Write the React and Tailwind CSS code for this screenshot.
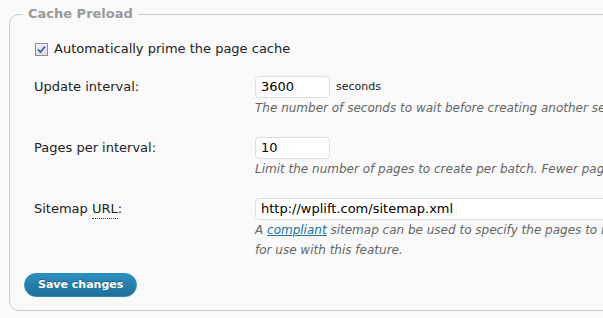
export default function App() {
  return (
    <div
      className="w-[603px] h-[318px] overflow-hidden bg-[#f9f9f9] text-[#333]"
      style={{ fontFamily: '"DejaVu Sans", Verdana, sans-serif' }}
    >
      <div className="pt-[6px] pl-[9px]">
        <fieldset className="w-[640px] border border-[#cccccc] rounded-[10px] pb-[13px]">
          <legend className="ml-[13px] px-[5px] text-[13px] font-bold text-[#999999] leading-[16px]">
            Cache Preload
          </legend>

          <div className="pl-[25px] pt-[19px] flex items-center h-[16px] box-content">
            <span className="w-[13px] h-[13px] border border-[#8f8f8f] bg-gradient-to-b from-[#f0f0f0] to-[#dcdcdc] flex items-center justify-center">
              <svg width="9" height="9" viewBox="0 0 9 9">
                <path d="M1 4.5 L3.5 7 L8 1.5" stroke="#3b55a8" strokeWidth="1.6" fill="none" />
              </svg>
            </span>
            <span className="ml-[6px] text-[13px] text-[#222]">Automatically prime the page cache</span>
          </div>

          <div className="pl-[24px] mt-[19px] flex">
            <div className="w-[221px] h-[22px] flex items-center text-[13px] text-[#222]">Update interval:</div>
            <div>
              <div className="flex items-center">
                <div className="w-[75px] h-[22px] border border-[#dfdfdf] rounded-[4px] bg-white px-[5px] flex items-center text-[13px] text-black">
                  3600
                </div>
                <span className="ml-[6px] text-[11px] text-[#222]">seconds</span>
              </div>
              <div className="w-[340px] text-[12px] italic text-[#666] leading-[20px] whitespace-nowrap">
                The number of seconds to wait before creating another set of cached pages.
              </div>
            </div>
          </div>

          <div className="pl-[24px] mt-[19px] flex">
            <div className="w-[221px] h-[22px] flex items-center text-[13px] text-[#222]">Pages per interval:</div>
            <div>
              <div className="w-[75px] h-[22px] border border-[#dfdfdf] rounded-[4px] bg-white px-[5px] flex items-center text-[13px] text-black">
                10
              </div>
              <div className="w-[340px] text-[12px] italic text-[#666] leading-[20px] whitespace-nowrap">
                Limit the number of pages to create per batch. Fewer pages will reduce load.
              </div>
            </div>
          </div>

          <div className="pl-[24px] mt-[19px] flex">
            <div className="w-[221px] h-[22px] flex items-center text-[13px] text-[#222]">
              Sitemap&nbsp;
              <abbr className="no-underline border-b border-dotted border-[#333]">URL</abbr>:
            </div>
            <div>
              <div className="w-[380px] h-[22px] border border-[#dfdfdf] rounded-[4px] bg-white px-[5px] flex items-center text-[13px] text-black">
                http://wplift.com/sitemap.xml
              </div>
              <div className="w-[340px] text-[12px] italic text-[#666] leading-[20px] whitespace-nowrap">
                A <a className="text-[#21759b] underline">compliant</a> sitemap can be used to specify the pages to make available
                <br />
                for use with this feature.
              </div>
            </div>
          </div>

          <div className="pl-[14px] mt-[11px]">
            <button className="h-[24px] px-[13px] rounded-full border border-[#298cba] bg-gradient-to-b from-[#2e8fbf] to-[#1f6f96] text-white text-[11px] font-bold [text-shadow:0_-1px_0_rgba(0,0,0,0.3)]">
              Save changes
            </button>
          </div>
        </fieldset>
      </div>
    </div>
  );
}
